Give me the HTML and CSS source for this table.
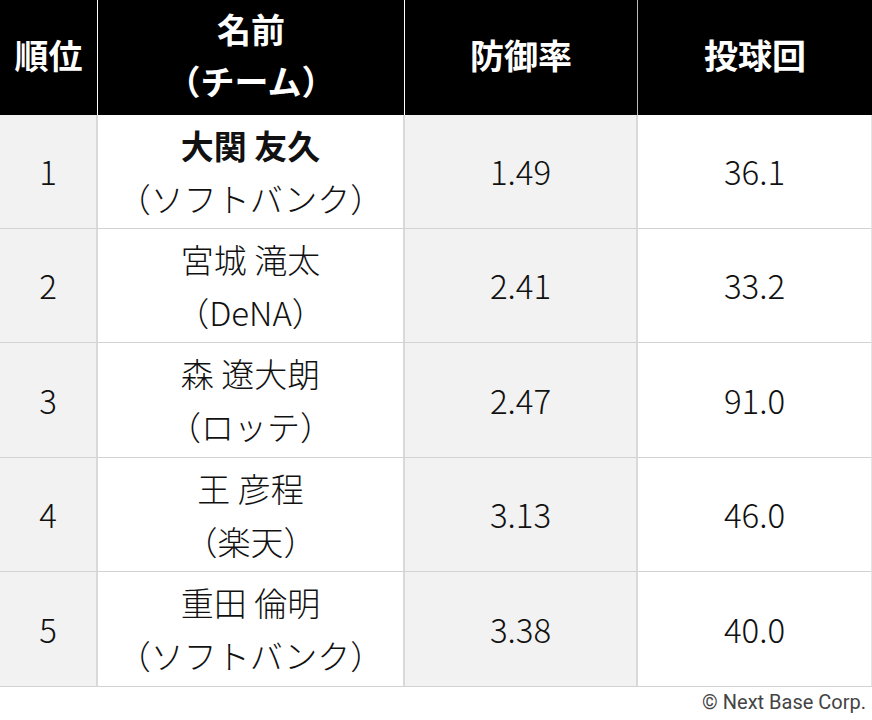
FILE: index.html
```html
<!DOCTYPE html>
<html lang="ja">
<head>
<meta charset="utf-8">
<link rel="stylesheet" href="styles.css">
</head>
<body>
<div class="table">
  <div class="row head">
    <div class="cell c1"><span>順位</span></div>
    <div class="cell c2"><span>名前<br>（チーム）</span></div>
    <div class="cell c3"><span>防御率</span></div>
    <div class="cell c4"><span>投球回</span></div>
  </div>
  <div class="row">
    <div class="cell c1"><span>1</span></div>
    <div class="cell c2"><span><b>大関 友久</b><br>（ソフトバンク）</span></div>
    <div class="cell c3"><span>1.49</span></div>
    <div class="cell c4"><span>36.1</span></div>
  </div>
  <div class="row">
    <div class="cell c1"><span>2</span></div>
    <div class="cell c2"><span>宮城 滝太<br>（DeNA）</span></div>
    <div class="cell c3"><span>2.41</span></div>
    <div class="cell c4"><span>33.2</span></div>
  </div>
  <div class="row tall">
    <div class="cell c1"><span>3</span></div>
    <div class="cell c2"><span>森 遼大朗<br>（ロッテ）</span></div>
    <div class="cell c3"><span>2.47</span></div>
    <div class="cell c4"><span>91.0</span></div>
  </div>
  <div class="row">
    <div class="cell c1"><span>4</span></div>
    <div class="cell c2"><span>王 彦程<br>（楽天）</span></div>
    <div class="cell c3"><span>3.13</span></div>
    <div class="cell c4"><span>46.0</span></div>
  </div>
  <div class="row tall">
    <div class="cell c1"><span>5</span></div>
    <div class="cell c2"><span>重田 倫明<br>（ソフトバンク）</span></div>
    <div class="cell c3"><span>3.38</span></div>
    <div class="cell c4"><span>40.0</span></div>
  </div>
</div>
<div class="credit">© Next Base Corp.</div>
</body>
</html>
```
FILE: styles.css
```css
html, body {
  margin: 0;
  padding: 0;
  background: #fff;
}
body {
  width: 872px;
  font-family: "Noto Sans CJK JP", "Noto Sans", sans-serif;
  color: #111;
}
.table {
  display: flex;
  flex-direction: column;
}
.row {
  display: grid;
  grid-template-columns: 98px 307px 233px 234px;
  height: 114px;
}
.row.tall {
  height: 115px;
}
.row.head {
  height: 115px;
  background: #000;
}
.cell {
  box-sizing: border-box;
  display: flex;
  align-items: center;
  justify-content: center;
  text-align: center;
  font-size: 33px;
  font-weight: 300;
  line-height: 53px;
  white-space: nowrap;
  border-right: 2px solid #d9d9d9;
  border-bottom: 1px solid #d2d2d2;
}
.cell.c1, .cell.c3 {
  background: #f2f2f2;
}
.cell.c2, .cell.c4 {
  background: #fff;
}
.cell.c4 {
  border-right: 1px solid #e4e4e4;
}
.cell b {
  font-weight: 700;
}
.head .cell {
  background: #000;
  color: #fff;
  font-weight: 700;
  font-size: 34px;
  line-height: 52px;
  padding-bottom: 5px;
  border-bottom: none;
  border-right: 1px solid #fff;
}
.head .cell.c3 {
  border-right: 1px solid #bbb;
}
.head .cell.c4 {
  border-right: none;
}
.credit {
  text-align: right;
  padding-right: 6px;
  padding-top: 3px;
  font-family: Roboto, "Liberation Sans", sans-serif;
  font-size: 20px;
  color: #444;
}
```
